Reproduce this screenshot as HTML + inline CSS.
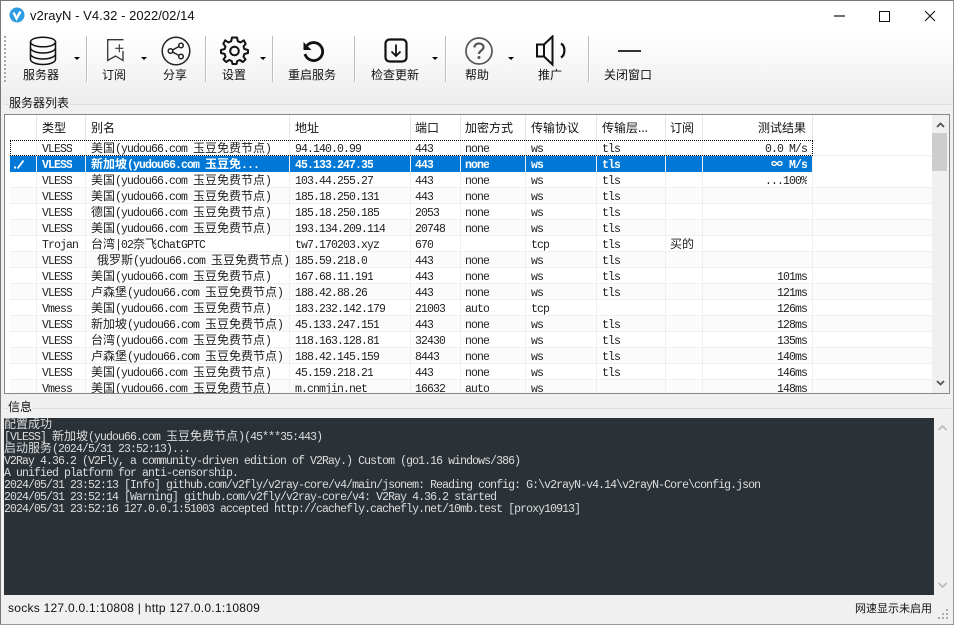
<!DOCTYPE html>
<html><head><meta charset="utf-8"><style>
html,body{margin:0;padding:0;width:954px;height:625px;overflow:hidden;background:#f0f0f0}
*{box-sizing:border-box}
.a{position:absolute}
body{font-family:"Liberation Sans","Noto Sans CJK SC",sans-serif;color:#111}
#win{position:absolute;left:0;top:0;width:954px;height:625px;background:#f0f0f0;border:1px solid #777;border-right-color:#999;border-bottom-color:#999;overflow:hidden}
#win>*{position:absolute}
.lab{font-size:12px;line-height:14px;top:67px;text-align:center;width:80px;font-family:"Noto Sans CJK SC",sans-serif}
.sep{width:1px;height:46px;top:35px;background:#bdbdbd;box-shadow:1px 0 0 #fff}
.dd{width:0;height:0;border-left:3px solid transparent;border-right:3px solid transparent;border-top:3px solid #000;top:56px}
#list{left:3px;top:113px;width:946px;height:280px;border:1px solid #828790;background:#fff;overflow:hidden}
.h,.r{position:absolute;left:0;width:927px;height:16px;font:11.5px/16px "Liberation Mono",monospace;letter-spacing:-.9px;white-space:pre}
.h{height:25px;width:808px;top:0;font:12px/25px "Noto Sans CJK SC",sans-serif;letter-spacing:0}
.h span{position:absolute;top:0}
.h u{position:absolute;top:0;height:25px;width:1px;background:#e5e5e5;text-decoration:none}
.r{border-bottom:1px solid #f0f0f0;color:#222}
.r span{position:absolute;top:2px;height:15px;overflow:hidden}
i{font:12px/0 "Noto Sans CJK SC",sans-serif;font-style:normal;letter-spacing:0}
.c1{left:37px}.c2{left:86px}.c3{left:290px}.c4{left:410px}.c5{left:460px}.c6{left:526px}.c7{left:597px}.c8{left:665px}
.c9{left:698px;width:104px;text-align:right}
.z{background:#fbfbfb}
.sel{background:#0078d7;color:#fff;font-weight:bold;border-bottom:0;width:808px}
.sel i{font-weight:bold}
.v{position:absolute;top:25px;width:1px;height:255px;background:#efefef}
#log{left:3px;top:417px;width:930px;height:177px;background:#2b3237;color:#dcdcdc;font:11.5px/12px "Liberation Mono",monospace;letter-spacing:-.9px;white-space:pre;overflow:hidden;padding-top:2px}
#log i{font:12px/0 "Noto Sans CJK SC",sans-serif;letter-spacing:0}
#log div{height:12px}
</style></head><body>
<div id="win">
<div style="left:0;top:0;width:952px;height:31px;background:#fff"></div>
<div style="left:0;top:31px;width:952px;height:72px;background:linear-gradient(#fff,#ededed)"></div>

<svg style="left:8px;top:6px" width="16" height="16" viewBox="0 0 16 16"><circle cx="8" cy="8" r="7.5" fill="#2f9be2"/><path d="M4.500 5.500 L7.500 11.500 L11.500 4.500" fill="none" stroke="#fff" stroke-width="2.400"/></svg>
<div style="left:29px;top:7px;font-size:13px;line-height:16px;color:#111;letter-spacing:.05px;white-space:pre">v2rayN - V4.32 - 2022/02/14</div>
<svg style="left:830px;top:6px" width="116" height="18" viewBox="0 0 116 18"><path d="M3 9H14" stroke="#111" stroke-width="1.200"/><rect x="48.500" y="4.500" width="10" height="10" fill="none" stroke="#111"/><path d="M94 4 L104 14 M104 4 L94 14" stroke="#111" stroke-width="1.100"/></svg>

<svg style="left:3px;top:35px" width="3" height="46"><path d="M1 0V46" stroke="#aaa" stroke-width="2" stroke-dasharray="2 2"/></svg>

<svg style="left:28px;top:35px" width="28" height="30" viewBox="0 0 28 30" fill="none" stroke="#111" stroke-width="1.500"><ellipse cx="14" cy="6" rx="12.500" ry="4.800"/><path d="M1.500 6V23.500C1.500 26 7 28.500 14 28.500S26.500 26 26.500 23.500V6"/><path d="M1.500 12C1.500 14.500 7 17 14 17S26.500 14.500 26.500 12M1.500 18C1.500 20.500 7 23 14 23S26.500 20.500 26.500 18"/></svg>
<div class="lab" style="left:0;">服务器</div>
<div class="dd" style="left:73px"></div>
<div class="sep" style="left:85px"></div>

<svg style="left:106px;top:38px" width="18" height="23" viewBox="0 0 18 23" fill="none" stroke="#333" stroke-width="1.300"><path d="M16.500 .7H.7V21.500L8.500 17L16 21.500V12"/><path d="M12.300 5.300V13.300M8.300 9.300H16.300" stroke-width="1.100"/></svg>
<div class="lab" style="left:73px">订阅</div>
<div class="dd" style="left:140px"></div>

<svg style="left:160px;top:35px" width="30" height="30" viewBox="0 0 30 30" fill="none" stroke="#222" stroke-width="1.500"><circle cx="15" cy="15" r="13.800"/><circle cx="20" cy="9.500" r="2.300"/><circle cx="9.500" cy="15" r="2.300"/><circle cx="20" cy="20.500" r="2.300"/><path d="M11.500 14L18 10.500M11.500 16L18 19.500"/></svg>
<div class="lab" style="left:134px">分享</div>
<div class="sep" style="left:204px"></div>

<svg style="left:219px;top:35px" width="29" height="29" viewBox="0 0 29 29" fill="none" stroke="#111" stroke-width="2"><path d="M12 1.500H17L17.800 5.200L20.600 6.400L23.800 4.300L25.700 7.800L23.500 10.500L24.300 13L28 14V17L24.300 18L23.500 20.700L25.500 23.500L22.800 26L19.800 24L17.300 25L16.500 28H12.500L11.700 25L9.200 24L6.200 26L3.500 23.500L5.500 20.700L4.700 18L1 17V14L4.700 13L5.500 10.500L3.300 7.800L5.200 4.300L8.400 6.400L11.200 5.200Z" stroke-linejoin="round"/><circle cx="14.500" cy="15" r="4.300"/></svg>
<div class="lab" style="left:193px">设置</div>
<div class="dd" style="left:259px"></div>
<div class="sep" style="left:271px"></div>

<svg style="left:301px;top:38px" width="22" height="24" viewBox="0 0 22 24" fill="none" stroke="#111" stroke-width="2.800"><path d="M5 6.500A9 9 0 1 1 3 15"/><path d="M1.500 3L1.500 11L9.500 11Z" fill="#111" stroke="none"/></svg>
<div class="lab" style="left:271px">重启服务</div>
<div class="sep" style="left:353px"></div>

<svg style="left:383px;top:37px" width="24" height="26" viewBox="0 0 24 26" fill="none" stroke="#111" stroke-width="2.200"><rect x="1.500" y="1.500" width="21" height="22" rx="4"/><path d="M12 6.500V18M7.500 13.500L12 18L16.500 13.500" stroke-width="1.800"/></svg>
<div class="lab" style="left:354px">检查更新</div>
<div class="dd" style="left:431px"></div>
<div class="sep" style="left:444px"></div>

<svg style="left:463px;top:35px" width="30" height="30" viewBox="0 0 30 30" fill="none" stroke="#555" stroke-width="1.700"><circle cx="15" cy="15" r="13"/><path d="M10.500 11.500C10.500 8.800 12.500 7.500 15 7.500C17.700 7.500 19.500 9 19.500 11.200C19.500 14.500 15 14.500 15 18" stroke-width="2.200"/><circle cx="15" cy="21.500" r="1.500" fill="#555" stroke="none"/></svg>
<div class="lab" style="left:436px">帮助</div>
<div class="dd" style="left:507px"></div>

<svg style="left:534px;top:34px" width="32" height="32" viewBox="0 0 32 32" fill="none" stroke="#111" stroke-width="2"><path d="M2 9.500H9V21.500H2Z"/><path d="M9 9.500L17.500 1.500V29.500L9 21.500"/><path d="M26 8.500C30.500 11 30.500 20 26 22.500" stroke-width="2.200"/></svg>
<div class="lab" style="left:509px">推广</div>
<div class="sep" style="left:587px"></div>

<div style="left:617px;top:49px;width:23px;height:2px;background:#333"></div>
<div class="lab" style="left:587px">关闭窗口</div>

<div style="left:3px;top:103px;width:947px;height:1px;background:#dcdcdc"></div>
<div style="left:8px;top:95px;font-size:12px;line-height:14px;background:#f0f0f0;font-family:'Noto Sans CJK SC',sans-serif;padding-right:1px">服务器列表</div>

<div id="list">
<div class="h"><u style="left:31px"></u><u style="left:80px"></u><u style="left:284px"></u><u style="left:405px"></u><u style="left:455px"></u><u style="left:520px"></u><u style="left:591px"></u><u style="left:660px"></u><u style="left:697px"></u><u style="left:807px"></u>
<span class="c1">类型</span><span class="c2">别名</span><span class="c3">地址</span><span class="c4">端口</span><span class="c5">加密方式</span><span class="c6">传输协议</span><span class="c7">传输层...</span><span class="c8">订阅</span><span style="left:753px">测试结果</span></div>

<div class="r" style="top:25px"><span class="c1">VLESS</span><span class="c2"><i>美国</i>(yudou66.com <i>玉豆免费节点</i>)</span><span class="c3">94.140.0.99</span><span class="c4">443</span><span class="c5">none</span><span class="c6">ws</span><span class="c7">tls</span><span class="c9">0.0 M/s</span></div>
<div class="r sel" style="top:41px"><span class="c1">VLESS</span><span class="c2"><i>新加坡</i>(yudou66.com <i>玉豆免</i>...</span><span class="c3">45.133.247.35</span><span class="c4">443</span><span class="c5">none</span><span class="c6">ws</span><span class="c7">tls</span><span class="c9"><i>∞</i> M/s</span></div>
<div class="r" style="top:57px"><span class="c1">VLESS</span><span class="c2"><i>美国</i>(yudou66.com <i>玉豆免费节点</i>)</span><span class="c3">103.44.255.27</span><span class="c4">443</span><span class="c5">none</span><span class="c6">ws</span><span class="c7">tls</span><span class="c9">...100%</span></div>
<div class="r z" style="top:73px"><span class="c1">VLESS</span><span class="c2"><i>美国</i>(yudou66.com <i>玉豆免费节点</i>)</span><span class="c3">185.18.250.131</span><span class="c4">443</span><span class="c5">none</span><span class="c6">ws</span><span class="c7">tls</span></div>
<div class="r" style="top:89px"><span class="c1">VLESS</span><span class="c2"><i>德国</i>(yudou66.com <i>玉豆免费节点</i>)</span><span class="c3">185.18.250.185</span><span class="c4">2053</span><span class="c5">none</span><span class="c6">ws</span><span class="c7">tls</span></div>
<div class="r z" style="top:105px"><span class="c1">VLESS</span><span class="c2"><i>美国</i>(yudou66.com <i>玉豆免费节点</i>)</span><span class="c3">193.134.209.114</span><span class="c4">20748</span><span class="c5">none</span><span class="c6">ws</span><span class="c7">tls</span></div>
<div class="r" style="top:121px"><span class="c1">Trojan</span><span class="c2"><i>台湾</i>|02<i>奈飞</i>ChatGPTC</span><span class="c3">tw7.170203.xyz</span><span class="c4">670</span><span class="c6">tcp</span><span class="c7">tls</span><span class="c8"><i>买的</i></span></div>
<div class="r z" style="top:137px"><span class="c1">VLESS</span><span class="c2"> <i>俄罗斯</i>(yudou66.com <i>玉豆免费节点</i>)</span><span class="c3">185.59.218.0</span><span class="c4">443</span><span class="c5">none</span><span class="c6">ws</span><span class="c7">tls</span></div>
<div class="r" style="top:153px"><span class="c1">VLESS</span><span class="c2"><i>美国</i>(yudou66.com <i>玉豆免费节点</i>)</span><span class="c3">167.68.11.191</span><span class="c4">443</span><span class="c5">none</span><span class="c6">ws</span><span class="c7">tls</span><span class="c9">101ms</span></div>
<div class="r z" style="top:169px"><span class="c1">VLESS</span><span class="c2"><i>卢森堡</i>(yudou66.com <i>玉豆免费节点</i>)</span><span class="c3">188.42.88.26</span><span class="c4">443</span><span class="c5">none</span><span class="c6">ws</span><span class="c7">tls</span><span class="c9">121ms</span></div>
<div class="r" style="top:185px"><span class="c1">Vmess</span><span class="c2"><i>美国</i>(yudou66.com <i>玉豆免费节点</i>)</span><span class="c3">183.232.142.179</span><span class="c4">21003</span><span class="c5">auto</span><span class="c6">tcp</span><span class="c9">126ms</span></div>
<div class="r z" style="top:201px"><span class="c1">VLESS</span><span class="c2"><i>新加坡</i>(yudou66.com <i>玉豆免费节点</i>)</span><span class="c3">45.133.247.151</span><span class="c4">443</span><span class="c5">none</span><span class="c6">ws</span><span class="c7">tls</span><span class="c9">128ms</span></div>
<div class="r" style="top:217px"><span class="c1">VLESS</span><span class="c2"><i>台湾</i>(yudou66.com <i>玉豆免费节点</i>)</span><span class="c3">118.163.128.81</span><span class="c4">32430</span><span class="c5">none</span><span class="c6">ws</span><span class="c7">tls</span><span class="c9">135ms</span></div>
<div class="r z" style="top:233px"><span class="c1">VLESS</span><span class="c2"><i>卢森堡</i>(yudou66.com <i>玉豆免费节点</i>)</span><span class="c3">188.42.145.159</span><span class="c4">8443</span><span class="c5">none</span><span class="c6">ws</span><span class="c7">tls</span><span class="c9">140ms</span></div>
<div class="r" style="top:249px"><span class="c1">VLESS</span><span class="c2"><i>美国</i>(yudou66.com <i>玉豆免费节点</i>)</span><span class="c3">45.159.218.21</span><span class="c4">443</span><span class="c5">none</span><span class="c6">ws</span><span class="c7">tls</span><span class="c9">146ms</span></div>
<div class="r z" style="top:265px"><span class="c1">Vmess</span><span class="c2"><i>美国</i>(yudou66.com <i>玉豆免费节点</i>)</span><span class="c3">m.cnmjin.net</span><span class="c4">16632</span><span class="c5">auto</span><span class="c6">ws</span><span class="c9">148ms</span></div>

<div class="v" style="left:31px"></div><div class="v" style="left:80px"></div><div class="v" style="left:284px"></div><div class="v" style="left:405px"></div><div class="v" style="left:455px"></div><div class="v" style="left:520px"></div><div class="v" style="left:591px"></div><div class="v" style="left:660px"></div><div class="v" style="left:697px"></div><div class="v" style="left:807px"></div>

<div class="a" style="left:0;top:25px;width:5px;height:255px;background:#fff"></div>
<div class="a" style="left:5px;top:25px;width:803px;height:16px;border:1px dotted #000"></div>
<svg class="a" style="left:7px;top:43px" width="16" height="12" viewBox="0 0 16 12"><path d="M2 8.500H4V10.500H2Z" fill="#fff"/><path d="M5.500 10.500L11.500 2.500" stroke="#fff" stroke-width="1.800" fill="none"/></svg>

<div class="a" style="left:927px;top:0;width:17px;height:278px;background:#f0f0f0"></div>
<div class="a" style="left:927px;top:18px;width:15px;height:38px;background:#cdcdcd"></div>
<svg class="a" style="left:927px;top:0" width="17" height="278"><path d="M5 12L8.500 8.500L12 12" fill="none" stroke="#555" stroke-width="1.800"/><path d="M5 266L8.500 269.500L12 266" fill="none" stroke="#555" stroke-width="1.800"/></svg>
</div>

<div style="left:3px;top:407px;width:947px;height:1px;background:#dcdcdc"></div>
<div style="left:7px;top:399px;font-size:12px;line-height:14px;background:#f0f0f0;font-family:'Noto Sans CJK SC',sans-serif;padding-right:1px">信息</div>

<div id="log"><div><i>配置成功</i></div><div>[VLESS] <i>新加坡</i>(yudou66.com <i>玉豆免费节点</i>)(45***35:443)</div><div><i>启动服务</i>(2024/5/31 23:52:13)...</div><div>V2Ray 4.36.2 (V2Fly, a community-driven edition of V2Ray.) Custom (go1.16 windows/386)</div><div>A unified platform for anti-censorship.</div><div>2024/05/31 23:52:13 [Info] github.com/v2fly/v2ray-core/v4/main/jsonem: Reading config: G:\v2rayN-v4.14\v2rayN-Core\config.json</div><div>2024/05/31 23:52:14 [Warning] github.com/v2fly/v2ray-core/v4: V2Ray 4.36.2 started</div><div>2024/05/31 23:52:16 127.0.0.1:51003 accepted http://cachefly.cachefly.net/10mb.test [proxy10913]</div></div>
<div style="left:933px;top:417px;width:17px;height:177px;background:#f0f0f0"></div>
<svg style="left:933px;top:417px" width="17" height="177"><path d="M4.500 12L8.500 8L12.500 12" fill="none" stroke="#bbb" stroke-width="1.800"/><path d="M4.500 165L8.500 169L12.500 165" fill="none" stroke="#bbb" stroke-width="1.800"/></svg>

<div style="left:7px;top:600px;font-size:12px;line-height:15px;white-space:pre;letter-spacing:.26px">socks 127.0.0.1:10808 | http 127.0.0.1:10809</div>
<div style="left:854px;top:600px;font-size:11px;line-height:15px;font-family:'Noto Sans CJK SC',sans-serif;white-space:pre">网速显示未启用</div>
<svg style="left:936px;top:607px" width="14" height="14" fill="#aaa"><rect x="9" y="1" width="2" height="2"/><rect x="5" y="5" width="2" height="2"/><rect x="9" y="5" width="2" height="2"/><rect x="1" y="9" width="2" height="2"/><rect x="5" y="9" width="2" height="2"/><rect x="9" y="9" width="2" height="2"/></svg>
</div>
</body></html>
